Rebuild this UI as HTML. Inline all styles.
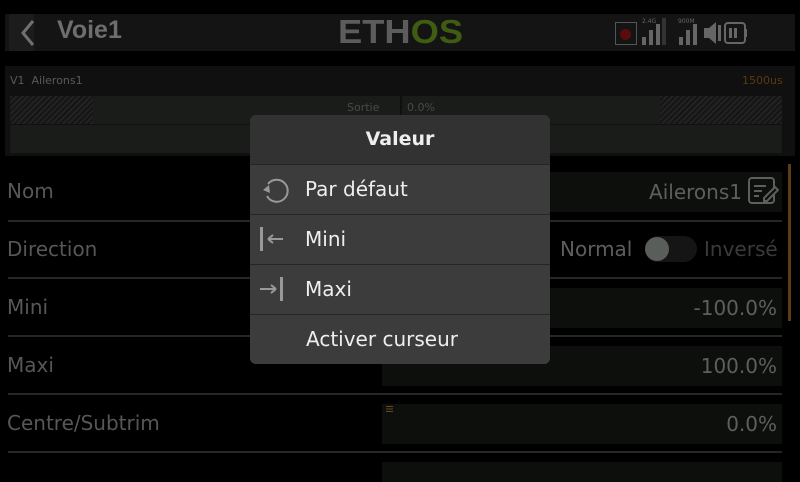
<!DOCTYPE html>
<html><head><meta charset="utf-8"><style>
*{margin:0;padding:0;box-sizing:border-box}
body{width:800px;height:480px;background:#000;position:relative;overflow:hidden;font-family:"DejaVu Sans","Liberation Sans",sans-serif;color:#5c5c5c}
.a{position:absolute}
.lbl{position:absolute;left:7px;font-size:20px;color:#575757}
.line{position:absolute;left:8px;width:774px;height:2px;background:#262626}
.fld{position:absolute;left:382px;width:400px;height:40px;background:#0d0f0d;font-size:20px;color:#5e5e5e;text-align:right;padding-right:5px;line-height:40px}
.mi{position:absolute;left:0;width:300px;height:49px;background:#3c3c3c;color:#eee;font-size:20px;line-height:49px;padding-left:55px}
.sep{position:absolute;left:0;width:300px;height:1px;background:#262626}
</style></head><body>
<div class="a" style="left:5px;top:14px;width:790px;height:37px;background:#141414"></div>
<div class="a" style="left:9px;top:14px;width:25px;height:37px;background:#1c1c1c"></div>
<svg class="a" style="left:20px;top:19px" width="16" height="28"><path d="M13 2 L3 14 L13 26" stroke="#707070" stroke-width="3" fill="none"/></svg>
<div class="a" style="left:57px;top:16px;font-size:25px;font-weight:bold;color:#6e6e6e;font-family:'Liberation Sans',sans-serif">Voie1</div>
<div class="a" style="left:338px;top:13px;font-size:33px;font-weight:bold;color:#5c5c5c;font-family:'Liberation Sans',sans-serif;transform:scaleX(1.1);transform-origin:left">ETH<span style="color:#3f5c12">OS</span></div>
<div class="a" style="left:615px;top:22px;width:22px;height:23px;border:1px solid #555"></div>
<div class="a" style="left:620px;top:29px;width:11px;height:11px;border-radius:50%;background:#5a0c0c"></div>
<div class="a" style="left:642px;top:18px;font-size:6px;color:#666">2.4G</div>
<div class="a" style="left:642px;top:37px;width:4px;height:8px;background:#666"></div>
<div class="a" style="left:649px;top:30px;width:4px;height:15px;background:#666"></div>
<div class="a" style="left:656px;top:24px;width:4px;height:21px;background:#666"></div>
<div class="a" style="left:662px;top:18px;width:4px;height:27px;background:#333"></div>
<div class="a" style="left:678px;top:18px;font-size:6px;color:#666">900M</div>
<div class="a" style="left:679px;top:37px;width:4px;height:8px;background:#666"></div>
<div class="a" style="left:686px;top:30px;width:4px;height:15px;background:#666"></div>
<div class="a" style="left:693px;top:24px;width:4px;height:21px;background:#666"></div>
<svg class="a" style="left:703px;top:20px" width="45" height="26"><path d="M1 8 H6 L13 2 V24 L6 18 H1Z" fill="#666"/><rect x="15" y="5" width="3" height="16" fill="#666"/><rect x="22" y="3" width="20" height="20" rx="3" stroke="#666" stroke-width="2" fill="none"/><rect x="26" y="8" width="3" height="10" fill="#666"/><rect x="31" y="8" width="3" height="10" fill="#666"/><rect x="42" y="9" width="2" height="8" fill="#666"/></svg>

<div class="a" style="left:5px;top:66px;width:790px;height:90px;background:#0f100f"></div>
<div class="a" style="left:10px;top:74px;font-size:11px;color:#5a5a5a">V1&nbsp; Ailerons1</div>
<div class="a" style="left:742px;top:74px;font-size:11px;color:#5a3a10">1500us</div>
<div class="a" style="left:10px;top:96px;width:772px;height:28px;background:#1a1c1a"></div>
<div class="a" style="left:10px;top:96px;width:83px;height:28px;background:repeating-linear-gradient(135deg,#222 0 2px,#151515 2px 4px)"></div>
<div class="a" style="left:660px;top:96px;width:122px;height:28px;background:repeating-linear-gradient(135deg,#222 0 2px,#151515 2px 4px)"></div>
<div class="a" style="left:400px;top:96px;width:2px;height:28px;background:#0f100f"></div>
<div class="a" style="left:347px;top:101px;font-size:11px;color:#4a4a4a">Sortie</div>
<div class="a" style="left:407px;top:101px;font-size:11px;color:#4a4a4a">0.0%</div>
<div class="a" style="left:10px;top:125px;width:772px;height:28px;background:#1a1c1a"></div>

<div class="a" style="left:788px;top:164px;width:3px;height:157px;background:#5b3e16"></div>

<div class="lbl" style="top:179px">Nom</div>
<div class="lbl" style="top:237px">Direction</div>
<div class="lbl" style="top:295px">Mini</div>
<div class="lbl" style="top:353px">Maxi</div>
<div class="lbl" style="top:411px">Centre/Subtrim</div>
<div class="line" style="top:220px"></div>
<div class="line" style="top:277px"></div>
<div class="line" style="top:335px"></div>
<div class="line" style="top:393px"></div>
<div class="line" style="top:451px"></div>
<div class="fld" style="top:172px;padding-right:40px">Ailerons1</div>
<svg class="a" style="left:747px;top:176px" width="32" height="30"><rect x="2" y="2" width="25" height="25" rx="3" stroke="#5e5e5e" stroke-width="2" fill="none"/><path d="M7 10H19M7 15H15M7 20H12" stroke="#5e5e5e" stroke-width="2"/><path d="M17 22 L28 11 L31 14 L20 25 H17Z" fill="#0d0f0d" stroke="#5e5e5e" stroke-width="2"/></svg>
<div class="a" style="left:560px;top:237px;font-size:20px;color:#5e5e5e">Normal</div>
<div class="a" style="left:645px;top:236px;width:52px;height:26px;border-radius:13px;background:#151515"></div>
<div class="a" style="left:645px;top:237px;width:24px;height:24px;border-radius:50%;background:#5a5e5a"></div>
<div class="a" style="left:704px;top:237px;font-size:20px;color:#3a3a3a">Inversé</div>
<div class="fld" style="top:288px">-100.0%</div>
<div class="fld" style="top:346px">100.0%</div>
<div class="fld" style="top:404px">0.0%</div>
<div class="a" style="left:386px;top:406px;width:7px;height:6px;background:repeating-linear-gradient(#6a4a1a 0 1px,transparent 1px 2.5px)"></div>
<div class="fld" style="top:462px;height:20px"></div>

<div class="a" style="left:250px;top:115px;width:300px;height:249px;border-radius:6px;overflow:hidden;background:#3c3c3c">
 <div class="a" style="left:0;top:0;width:300px;height:49px;background:#323232;color:#eee;font-weight:bold;font-size:19px;text-align:center;line-height:49px">Valeur</div>
 <div class="sep" style="top:49px"></div>
 <div class="mi" style="top:50px">Par défaut</div>
 <div class="sep" style="top:99px"></div>
 <div class="mi" style="top:100px">Mini</div>
 <div class="sep" style="top:149px"></div>
 <div class="mi" style="top:150px">Maxi</div>
 <div class="sep" style="top:199px"></div>
 <div class="mi" style="top:200px;padding-left:56px">Activer curseur</div>
 <svg class="a" style="left:10px;top:61px" width="30" height="28"><path d="M8 8 A11 11 0 1 1 7 20" stroke="#999" stroke-width="2" fill="none"/><path d="M3 14 L9 9 L10 17Z" fill="#999"/></svg>
 <svg class="a" style="left:9px;top:110px" width="30" height="28"><rect x="1" y="2" width="3" height="24" fill="#999"/><path d="M9 14H24M9 14L14 10M9 14L14 18" stroke="#999" stroke-width="2" fill="none"/></svg>
 <svg class="a" style="left:9px;top:160px" width="30" height="28"><rect x="21" y="2" width="3" height="24" fill="#999"/><path d="M1 14H17M17 14L12 10M17 14L12 18" stroke="#999" stroke-width="2" fill="none"/></svg>
</div>
</body></html>
